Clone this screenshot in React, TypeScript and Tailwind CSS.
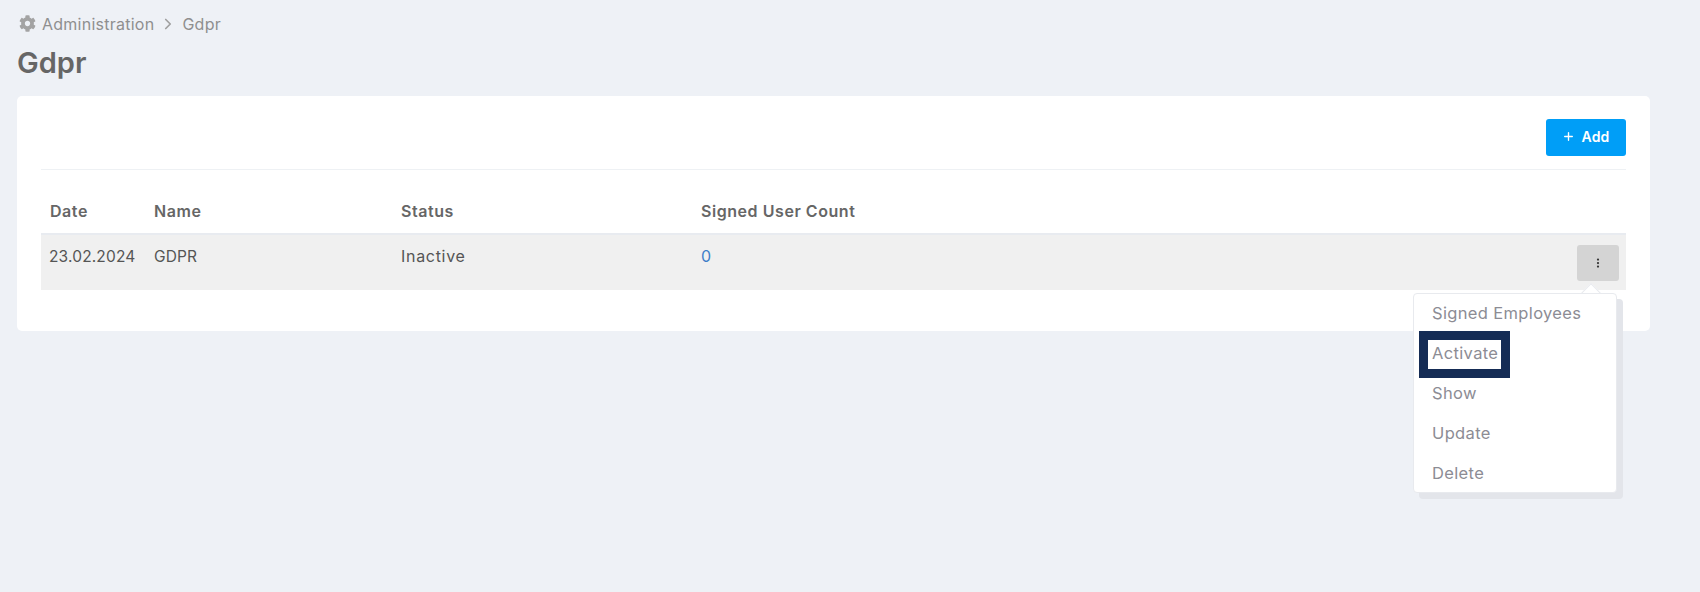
import { Plus, ChevronRight, EllipsisVertical } from "lucide-react";
import { FaCog } from "react-icons/fa";

const font = "font-['Inter','Liberation_Sans',sans-serif]";
const items = ["Signed Employees", "Activate", "Show", "Update", "Delete"];

export default function App() {
  return (
    <div className={`${font} h-[592px] bg-[#eef1f6] pl-[17px] pt-[15px] overflow-hidden`}>
      <div className="flex items-center h-[18px] text-[16px] tracking-[0.25px] text-[#8f8f8f]">
        <FaCog className="w-[17px] h-[17px] ml-[2px] -mt-[1px] text-[#a3a3a3]" />
        <span className="ml-[6px]">Administration</span>
        <ChevronRight className="w-[18px] h-[18px] mx-[5px] text-[#a0a0a0]" strokeWidth={2.25} />
        <span>Gdpr</span>
      </div>
      <h1 className="mt-[12px] h-[36px] leading-[36px] text-[29px] font-semibold text-[#666666]">Gdpr</h1>
      <div className="relative mt-[15px] w-[1633px] h-[235px] bg-white rounded-[5px] px-[24px] pt-[23px]">
        <div className="flex justify-end h-[51px] border-b border-[#eef1f4]">
          <button className="w-[80px] h-[37px] pb-[3px] bg-[#009ef7] rounded-[3px] text-white text-[14px] font-semibold tracking-[0.2px] flex items-center justify-center gap-[6px]">
            <Plus className="w-[13px] h-[13px]" strokeWidth={2.5} />
            Add
          </button>
        </div>
        <table className="w-full mt-[19px] border-collapse table-fixed text-[16px]">
          <thead>
            <tr className="h-[45px] text-left text-[#666666] border-b-2 border-[#e8ebf0]">
              <th className="w-[104px] pl-[9px] font-semibold tracking-[0.55px]">Date</th>
              <th className="w-[247px] pl-[9px] font-semibold tracking-[0.55px]">Name</th>
              <th className="w-[300px] pl-[9px] font-semibold tracking-[0.55px]">Status</th>
              <th className="pl-[9px] font-semibold tracking-[0.55px]">Signed User Count</th>
              <th className="w-[60px]"></th>
            </tr>
          </thead>
          <tbody>
            <tr className="h-[56px] bg-[#f0f0f0] text-[#555555] align-top">
              <td className="pl-[8px] pt-[10px] text-[15.5px] tracking-[0.15px]">23.02.2024</td>
              <td className="pl-[9px] pt-[10px] text-[15.5px] tracking-[0.1px]">GDPR</td>
              <td className="pl-[9px] pt-[9px] tracking-[0.7px]">Inactive</td>
              <td className="pl-[9px] pt-[9px] text-[#3f7fc9]">0</td>
              <td className="pt-[10px]">
                <button className="ml-[11px] w-[42px] h-[36px] bg-[#d4d4d4] rounded-[3px] flex items-center justify-center text-[#333]">
                  <EllipsisVertical className="w-[12px] h-[12px]" strokeWidth={2.5} />
                </button>
              </td>
            </tr>
          </tbody>
        </table>
        <div className="absolute left-[1396px] top-[197px] w-[204px] h-[200px]">
          <div className="absolute left-[6px] top-[6px] w-[204px] h-[200px] bg-[#e3e5ea] rounded-[4px]" />
          <div className="absolute right-[19px] -top-[7px] w-[14px] h-[14px] rotate-45 bg-white border-l border-t border-[#e8eaee]" />
          <div className="relative w-[204px] h-[200px] bg-white rounded-[4px] border border-[#e8eaee] pt-[1px]">
            {items.map((t) => (
              <div key={t} className="h-[40px] leading-[36px] pl-[18px] text-[16.5px] tracking-[0.35px] text-[#8c8c94]">
                {t}
              </div>
            ))}
          </div>
          <div className="absolute left-[6px] top-[38px] w-[91px] h-[47px] border-[9px] border-[#152c55]" />
        </div>
      </div>
    </div>
  );
}
